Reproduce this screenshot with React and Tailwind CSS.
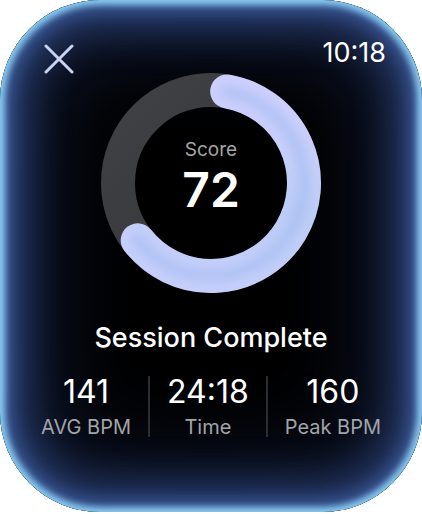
import React from "react";

// Progress arc drawn from 10° to 232° (clockwise from 12 o'clock)
function ScoreRing() {
  return (
    <svg width="222" height="222" viewBox="0 0 222 222" className="block">
      <defs>
        <linearGradient id="arc" x1="0.6" y1="0" x2="0.3" y2="1">
          <stop offset="0" stopColor="#cdcffd" />
          <stop offset="0.5" stopColor="#bccdf6" />
          <stop offset="1" stopColor="#c6cffb" />
        </linearGradient>
        <linearGradient id="track" x1="0" y1="0" x2="1" y2="1">
          <stop offset="0" stopColor="#404144" />
          <stop offset="1" stopColor="#333437" />
        </linearGradient>
        <filter id="soft" x="-20%" y="-20%" width="140%" height="140%">
          <feGaussianBlur stdDeviation="4" />
        </filter>
      </defs>
      <circle cx="111" cy="111" r="93" fill="none" stroke="url(#track)" strokeWidth="34" />
      <path
        d="M127.15 19.41 A93 93 0 1 1 37.71 168.26"
        fill="none"
        stroke="url(#arc)"
        strokeWidth="34"
        strokeLinecap="round"
      />
      <path
        d="M127.15 19.41 A93 93 0 1 1 37.71 168.26"
        fill="none"
        stroke="#a4bbf0"
        strokeOpacity="0.55"
        strokeWidth="14"
        strokeLinecap="round"
        filter="url(#soft)"
      />
    </svg>
  );
}

function Stat({ value, label }) {
  return (
    <div className="flex flex-col items-center">
      <span className="text-[32px] leading-none text-white">{value}</span>
      <span className="mt-[9px] text-[20px] leading-none text-[#a3a4a8]">{label}</span>
    </div>
  );
}

export default function App() {
  return (
    <div className="h-[514px] w-[422px] bg-white" style={{ fontFamily: "Inter, 'Noto Sans', sans-serif" }}>
      <div className="flex h-[512px] w-[422px] flex-col rounded-[100px] bg-black shadow-[inset_0_0_6px_5px_#88caf0,inset_0_0_16px_12px_#3a5794,inset_0_0_40px_26px_#2a3f70,inset_0_0_90px_50px_#111a33]">
        {/* Top bar */}
        <div className="flex h-[72px] items-start justify-between pl-[44px] pr-[36px] pt-[39px]">
          <svg width="30" height="30" viewBox="0 0 30 30" className="mt-[5px]">
            <path d="M2 2 L28 28 M28 2 L2 28" stroke="#c9d2f5" strokeWidth="3" strokeLinecap="round" />
          </svg>
          <span className="text-[27px] leading-none text-white">10:18</span>
        </div>

        {/* Ring */}
        <div className="relative mx-auto h-[222px] w-[222px]">
          <ScoreRing />
          <div className="absolute inset-0 flex flex-col items-center pt-[68px]">
            <span className="text-[19px] leading-none text-[#a6a6a6]">Score</span>
            <span className="mt-[7px] text-[48px] font-semibold leading-none text-white">72</span>
          </div>
        </div>

        <div className="mt-[30px] text-center text-[27px] font-medium leading-none text-white">
          Session Complete
        </div>

        {/* Stats */}
        <div className="mt-[25px] flex justify-center gap-[17px]">
          <Stat value="141" label="AVG BPM" />
          <div className="w-[2px] self-stretch bg-[#2a2d35]" />
          <Stat value="24:18" label="Time" />
          <div className="w-[2px] self-stretch bg-[#2a2d35]" />
          <Stat value="160" label="Peak BPM" />
        </div>
      </div>
    </div>
  );
}
